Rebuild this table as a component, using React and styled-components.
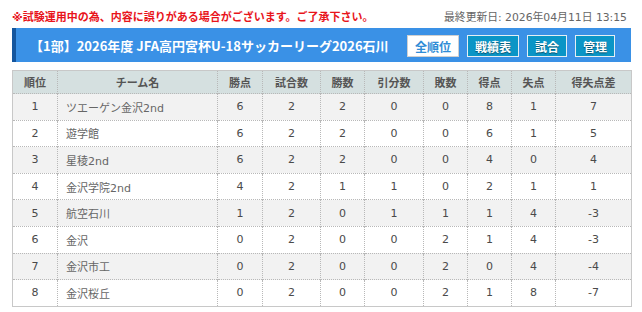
import styled, { createGlobalStyle } from "styled-components";

const GlobalStyle = createGlobalStyle`
  body {
    margin: 0;
    background: #ffffff;
    font-family: "DejaVu Sans", "Noto Sans CJK JP", sans-serif;
  }
`;

const Page = styled.div`
  width: 619px;
  padding: 0 11px 0 12px;
`;

const NoticeRow = styled.div`
  height: 28px;
  display: flex;
  align-items: center;
  justify-content: space-between;
  padding-top: 3px;
  box-sizing: border-box;
`;

const Notice = styled.span`
  color: #e8141b;
  font-size: 11px;
  font-weight: 700;
`;

const Updated = styled.span`
  color: #666666;
  font-size: 10.8px;
  margin-right: 4px;
`;

const TitleBar = styled.div`
  height: 34px;
  display: flex;
  align-items: center;
  background: #3a91e6;
  border-left: 4px solid #14569e;
  padding: 0 16px 0 14px;
  margin-bottom: 8px;
`;

const Title = styled.h1`
  flex: 1;
  margin: 0;
  color: #ffffff;
  font-family: "Noto Sans CJK JP", sans-serif;
  font-size: 13px;
  font-weight: 700;
  white-space: nowrap;
`;

const Nav = styled.div`
  display: flex;
  gap: 8px;
  margin-top: 2px;
`;

const NavButton = styled.a`
  height: 22px;
  box-sizing: border-box;
  padding: 0 7px;
  display: flex;
  align-items: center;
  font-size: 12px;
  font-weight: 700;
  cursor: pointer;
  border: 1px solid ${({ $active }) => ($active ? "#d0d0d0" : "#e4eef4")};
  background: ${({ $active }) => ($active ? "#ffffff" : "#0a95c6")};
  color: ${({ $active }) => ($active ? "#2f8cd6" : "#ffffff")};
  text-shadow: ${({ $active }) => ($active ? "none" : "0 1px 1px rgba(0,0,0,0.45)")};
`;

const Table = styled.table`
  width: 619px;
  border-collapse: collapse;
  border: 1px solid #c8c8c8;
  table-layout: fixed;
  font-size: 11px;
`;

const Th = styled.th`
  height: 22px;
  padding: 0;
  background: #d5e0e0;
  color: #555555;
  font-weight: 700;
  border-left: 1px dotted #b8b8b8;
  &:first-child {
    border-left: none;
  }
`;

const Row = styled.tr`
  background: ${({ $odd }) => ($odd ? "#f2f2f2" : "#ffffff")};
  border-top: 1px dotted #b8b8b8;
`;

const Td = styled.td`
  height: 25.6px;
  padding: 0 ${({ $left }) => ($left ? "8px" : "0")};
  text-align: ${({ $left }) => ($left ? "left" : "center")};
  color: ${({ $left }) => ($left ? "#666666" : "#4a4a4a")};
  border-left: 1px dotted #b8b8b8;
  &:first-child {
    border-left: none;
  }
`;

const columns = [
  { label: "順位", width: 45 },
  { label: "チーム名", width: 160 },
  { label: "勝点", width: 45 },
  { label: "試合数", width: 58 },
  { label: "勝数", width: 44 },
  { label: "引分数", width: 59 },
  { label: "敗数", width: 44 },
  { label: "得点", width: 44 },
  { label: "失点", width: 44 },
  { label: "得失点差", width: 76 },
];

const standings = [
  [1, "ツエーゲン金沢2nd", 6, 2, 2, 0, 0, 8, 1, 7],
  [2, "遊学館", 6, 2, 2, 0, 0, 6, 1, 5],
  [3, "星稜2nd", 6, 2, 2, 0, 0, 4, 0, 4],
  [4, "金沢学院2nd", 4, 2, 1, 1, 0, 2, 1, 1],
  [5, "航空石川", 1, 2, 0, 1, 1, 1, 4, -3],
  [6, "金沢", 0, 2, 0, 0, 2, 1, 4, -3],
  [7, "金沢市工", 0, 2, 0, 0, 2, 0, 4, -4],
  [8, "金沢桜丘", 0, 2, 0, 0, 2, 1, 8, -7],
];

const navItems = ["全順位", "戦績表", "試合", "管理"];

const App = () => (
  <>
    <GlobalStyle />
    <Page>
      <NoticeRow>
        <Notice>※試験運用中の為、内容に誤りがある場合がございます。ご了承下さい。</Notice>
        <Updated>最終更新日: 2026年04月11日 13:15</Updated>
      </NoticeRow>
      <TitleBar>
        <Title>【1部】2026年度 JFA高円宮杯U-18サッカーリーグ2026石川</Title>
        <Nav>
          {navItems.map((item, i) => (
            <NavButton key={item} $active={i === 0}>
              {item}
            </NavButton>
          ))}
        </Nav>
      </TitleBar>
      <Table>
        <colgroup>
          {columns.map((c) => (
            <col key={c.label} style={{ width: c.width }} />
          ))}
        </colgroup>
        <thead>
          <tr>
            {columns.map((c) => (
              <Th key={c.label}>{c.label}</Th>
            ))}
          </tr>
        </thead>
        <tbody>
          {standings.map((row, i) => (
            <Row key={row[1]} $odd={i % 2 === 0}>
              {row.map((cell, j) => (
                <Td key={j} $left={j === 1}>
                  {cell}
                </Td>
              ))}
            </Row>
          ))}
        </tbody>
      </Table>
    </Page>
  </>
);

export default App;
